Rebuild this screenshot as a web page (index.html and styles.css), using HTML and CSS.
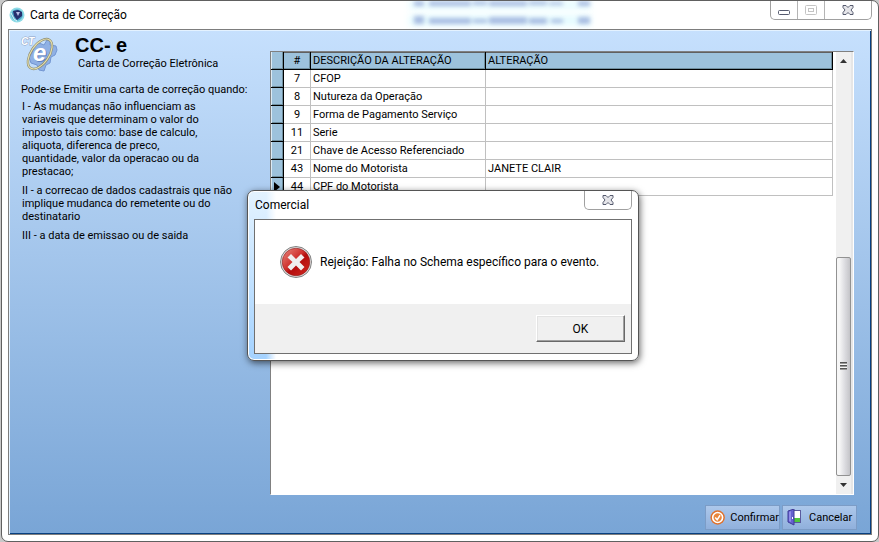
FILE: index.html
```html
<!DOCTYPE html>
<html lang="pt-BR">
<head>
  <meta charset="UTF-8" />
  <meta name="viewport" content="width=device-width, initial-scale=1.0" />
  <title>Carta de Correção</title>
  <link rel="stylesheet" href="styles.css">
</head>
<body>

  <div class="window">
    <!-- Title bar -->
    <header class="titlebar">
      <svg class="app-icon" viewBox="0 0 16 16" aria-hidden="true">
        <circle cx="8" cy="8" r="7.5" fill="#8fdbe6"/>
        <circle cx="8" cy="8" r="5.8" fill="#4fa9cc"/>
        <path d="M4 4l5-1 4 2v4l-5 4-3-4z" fill="#26306e"/>
        <path d="M7 5l4 0-2 4z" fill="#b9bfe6"/>
        <path d="M2 6l3 6 3 2" stroke="#e0fafa" fill="none"/>
      </svg>
      <h1 class="window-title">Carta de Correção</h1>
      <svg class="glass-blur" viewBox="0 0 200 28" aria-hidden="true">
        <g class="glow">
          <rect x="10" y="0" width="182" height="8"/>
          <rect x="10" y="14" width="182" height="11"/>
        </g>
        <g class="ink">
          <path d="M15 0h10v5H15zM30 0h42v5H30zM74 0h14v4H74zM90 0h38v5H90zM130 0h18v4h-18zM150 1h14v3h-14zM179 0h12v5h-12z"/>
          <path d="M15 15h10v8H15zM30 17h42v6H30zM74 18h14v4H74zM90 16h38v7H90zM130 17h18v6h-18zM152 18h12v4h-12zM179 16h12v7h-12z"/>
        </g>
      </svg>
      <div class="caption-buttons">
        <button type="button" class="min-btn" aria-label="Minimizar">
          <svg width="12" height="11" viewBox="0 0 12 11"><rect x=".5" y="5.500" width="11" height="4" rx="1" fill="#fff" stroke="#555a6e"/></svg>
        </button>
        <button type="button" class="max-btn" aria-label="Maximizar" disabled>
          <svg width="12" height="11" viewBox="0 0 12 11" fill="#fff" stroke="#c4c4c4"><rect x=".5" y=".5" width="11" height="9" rx="1"/><rect x="3.500" y="3.500" width="5" height="3"/></svg>
        </button>
        <button type="button" class="close-btn" aria-label="Fechar">
          <svg width="12" height="11" viewBox="0 0 12 11"><path d="M1 .5h3l2 2 2-2h3v2l-2 2.500 2 2.500v2H8l-2-2-2 2H1v-2L3 5 1 2.500z" fill="#e6e6ea" stroke="#555a6e"/></svg>
        </button>
      </div>
    </header>

    <main class="client">
      <div class="content">
        <!-- Instructions -->
        <section class="info">
          <div class="brand">
            <svg class="cte-logo" viewBox="0 0 38 38" aria-hidden="true">
              <path d="M13 12l5-4 5 2 3-5 3 1v4l6 1 1 4-2 5-4 2-1 6-4 2-2 6-5-1-2-5-6-2-2-6 3-4z" fill="#8fb0e4" stroke="#7396d2"/>
              <ellipse cx="19" cy="19" rx="9" ry="17" transform="rotate(34 19 19)" fill="none" stroke="#8a8a72" stroke-width="2.400"/>
              <ellipse cx="19" cy="19" rx="9" ry="17" transform="rotate(34 19 19)" fill="none" stroke="#e5dfac" stroke-width="1.200"/>
              <text class="logo-e-shadow" x="13" y="27">e</text>
              <text class="logo-e" x="12" y="26">e</text>
              <text class="logo-ct" x="0" y="10">CT</text>
            </svg>
            <div class="brand-text">
              <h2>CC- e</h2>
              <p>Carta de Correção Eletrônica</p>
            </div>
          </div>
          <p class="lead">Pode-se Emitir uma carta de correção quando:</p>
          <div class="rules">
            <p>I - As mudanças não influenciam as<br>
            variaveis que determinam o valor do<br>
            imposto tais como: base de calculo,<br>
            aliquota, diferenca de preco,<br>
            quantidade, valor da operacao ou da<br>
            prestacao;</p>
            <p>II - a correcao de dados cadastrais que não<br>
            implique mudanca do remetente ou do<br>
            destinatario</p>
            <p>III - a data de emissao ou de saida</p>
          </div>
        </section>

        <!-- Grid -->
        <section class="grid">
          <div class="grid-body">
            <table>
              <thead>
                <tr><th class="mark"></th><th class="num">#</th><th class="desc">DESCRIÇÃO DA ALTERAÇÃO</th><th>ALTERAÇÃO</th></tr>
              </thead>
              <tbody>
                <tr><td class="mark"></td><td class="num">7</td><td>CFOP</td><td></td></tr>
                <tr><td class="mark"></td><td class="num">8</td><td>Nutureza da Operação</td><td></td></tr>
                <tr><td class="mark"></td><td class="num">9</td><td>Forma de Pagamento Serviço</td><td></td></tr>
                <tr><td class="mark"></td><td class="num">11</td><td>Serie</td><td></td></tr>
                <tr><td class="mark"></td><td class="num">21</td><td>Chave de Acesso Referenciado</td><td></td></tr>
                <tr><td class="mark"></td><td class="num">43</td><td>Nome do Motorista</td><td>JANETE CLAIR</td></tr>
                <tr><td class="mark current"><svg width="6" height="10" viewBox="0 0 6 10"><path d="M0 0l6 5-6 5z"/></svg></td><td class="num">44</td><td>CPF do Motorista</td><td></td></tr>
              </tbody>
            </table>
          </div>
          <div class="scrollbar">
            <button type="button" aria-label="Rolar para cima"><svg width="7" height="4" viewBox="0 0 7 4"><path d="M0 4l3.500-4L7 4z"/></svg></button>
            <div class="track">
              <div class="thumb"><span class="grip"></span></div>
            </div>
            <button type="button" aria-label="Rolar para baixo"><svg width="7" height="4" viewBox="0 0 7 4"><path d="M0 0l3.500 4L7 0z"/></svg></button>
          </div>
        </section>
      </div>

      <footer class="actions">
        <button type="button" class="action">
          <svg width="17" height="17" viewBox="0 0 17 17" aria-hidden="true">
            <circle cx="8.500" cy="8.500" r="8" fill="#e0702a"/>
            <circle cx="8.500" cy="8.500" r="5.500" fill="#e9863c" stroke="#fff" stroke-width="1.800"/>
            <path d="M5.800 8.500l2.200 2.500 3.200-5" fill="none" stroke="#fff" stroke-width="1.600"/>
          </svg>
          Confirmar
        </button>
        <button type="button" class="action">
          <svg width="17" height="17" viewBox="0 0 17 17" aria-hidden="true">
            <rect x="5.500" y="1.500" width="8" height="12" fill="#fff" stroke="#5b5b9e"/>
            <path d="M7 9h6v4H7z" fill="#4fc63c"/>
            <path d="M1 2l6-2v16l-6-3z" fill="#6560cf" stroke="#3f3b96"/>
            <path d="M2 3l2-1v11l-2-1z" fill="#908be8"/>
            <rect x="5" y="8" width="1" height="2" fill="#fff"/>
          </svg>
          Cancelar
        </button>
      </footer>
    </main>
  </div>

  <!-- Error message -->
  <div class="dialog" role="alertdialog" aria-labelledby="dialogTitle" aria-describedby="dialogText">
    <div class="dialog-titlebar">
      <h2 id="dialogTitle">Comercial</h2>
      <div class="caption-buttons">
        <button type="button" class="close-btn" aria-label="Fechar">
          <svg width="12" height="11" viewBox="0 0 12 11"><path d="M1 .5h3l2 2 2-2h3v2l-2 2.500 2 2.500v2H8l-2-2-2 2H1v-2L3 5 1 2.500z" fill="#e6e6ea" stroke="#555a6e"/></svg>
        </button>
      </div>
    </div>
    <div class="dialog-client">
      <div class="message">
        <svg class="error-icon" viewBox="0 0 32 32" aria-hidden="true">
          <defs>
            <linearGradient id="red" x1="0" y1="0" x2="1" y2="1">
              <stop offset="0" stop-color="#e88a80"/>
              <stop offset=".45" stop-color="#cf2f2c"/>
              <stop offset=".55" stop-color="#b30d0d"/>
              <stop offset="1" stop-color="#d42a22"/>
            </linearGradient>
          </defs>
          <circle cx="16" cy="16" r="15.500" fill="#e4e4e4" stroke="#808080"/>
          <circle cx="16" cy="16" r="13.800" fill="url(#red)" stroke="#8c1a1a" stroke-width=".6"/>
          <path d="M11 8l5 5 5-5 3.500 3.500-5 4.500 5 5-3.500 3.500-5-5-5 5L7.500 21l5-5-5-4.500z" fill="#efefef"/>
        </svg>
        <p id="dialogText">Rejeição: Falha no Schema específico para o evento.</p>
      </div>
      <div class="dialog-actions">
        <button type="button" class="ok-btn">OK</button>
      </div>
    </div>
  </div>

</body>
</html>
```
FILE: styles.css
```css
* {
  box-sizing: border-box;
}

body {
  margin: 0;
  background: #c8c8c8;
  color: #000;
  font-family: Roboto, "Liberation Sans", sans-serif;
  font-size: 12px;
}

h1, h2, p {
  margin: 0;
  font-weight: normal;
}

button {
  font-family: inherit;
  font-size: inherit;
  color: inherit;
  padding: 0;
}

.window {
  display: flex;
  flex-direction: column;
  min-height: 100vh;
  margin-left: 1px;
  padding: 0 6px 6px;
  background: #fff;
  border: 1px solid #606060;
  border-radius: 7px;
}

/* Title bar */
.titlebar {
  position: relative;
  display: flex;
  align-items: flex-start;
  height: 28px;
}

.app-icon {
  width: 16px;
  height: 16px;
  margin: 6px 5px 0 1px;
}

.window-title {
  flex: 1;
  font-size: 12px;
  line-height: 28px;
}

.glass-blur {
  position: absolute;
  left: 391px;
  top: 0;
  width: 200px;
  height: 28px;
}

.glow {
  fill: #e6fcff;
  filter: blur(3px);
}

.ink {
  fill: #8fa3d6;
  opacity: 0.7;
  filter: blur(2px);
}

.caption-buttons {
  display: flex;
  height: 19px;
  border: 1px solid #a0a0a0;
  border-top: none;
  border-radius: 0 0 5px 5px;
}

.caption-buttons button {
  display: flex;
  align-items: center;
  justify-content: center;
  width: 27px;
  background: none;
  border: none;
  border-right: 1px solid #b4b4b4;
}

.caption-buttons .close-btn {
  width: 46px;
  border-right: none;
}

/* Client area */
.client {
  flex: 1;
  display: flex;
  flex-direction: column;
  border: 1px solid #7d7d7d;
  box-shadow: inset 1px 1px #e4f2ff, inset -1px -1px #073f80;
  background: linear-gradient(#c6e0fd, #79a5d6);
  font-size: 11px;
}

.content {
  flex: 1;
  display: flex;
  padding: 21px 17px 0 0;
}

.info {
  width: 261px;
  padding-left: 12px;
  margin-top: -18px;
}

.brand {
  display: flex;
  gap: 16px;
}

.cte-logo {
  width: 38px;
  height: 38px;
  margin-top: 2px;
}

.logo-e,
.logo-e-shadow {
  font: italic bold 24px "Liberation Sans", sans-serif;
  fill: #fff;
}

.logo-e-shadow {
  fill: #5f80bd;
}

.logo-ct {
  font: italic bold 10px "Liberation Sans", sans-serif;
  fill: #fff;
  stroke: #8fa3c4;
  stroke-width: 1px;
  paint-order: stroke;
}

.brand-text h2 {
  font: bold 20px/24px "Liberation Sans", Arial, sans-serif;
}

.brand-text p {
  padding-left: 3px;
  line-height: 13px;
}

.lead {
  margin-top: 8px;
  line-height: 17px;
  white-space: nowrap;
}

.rules {
  display: flex;
  flex-direction: column;
  gap: 6px;
  padding: 2px 0 0 1px;
  line-height: 13px;
  white-space: nowrap;
}

/* Grid */
.grid {
  flex: 1;
  display: flex;
  background: #fff;
  border: 1px solid #808080;
  border-right-color: #fff;
  border-bottom-color: #fff;
}

.grid-body {
  flex: 1;
  padding-right: 3px;
}

table {
  width: 100%;
  table-layout: fixed;
  border-collapse: separate;
  border-spacing: 0;
}

th,
td {
  height: 18px;
  padding: 0 2px;
  border-right: 1px solid #c0c0c0;
  border-bottom: 1px solid #c0c0c0;
  line-height: 17px;
  text-align: left;
  font-weight: normal;
}

th {
  background: #9dc2dc;
  border-color: #000;
  box-shadow: inset 0 1px #606060, inset -1px -1px #71909f;
}

.mark {
  width: 13px;
  background: #9dc2dc;
  border-color: #000;
  box-shadow: inset 1px 0 #dcebf5, inset -1px -1px #71909f;
}

.current {
  padding: 0 0 0 3px;
}

.current svg {
  display: block;
}

.num {
  width: 27px;
  text-align: center;
}

.desc {
  width: 175px;
}

.scrollbar {
  display: flex;
  flex-direction: column;
  width: 17px;
  background: #f0f0f0;
  border-right: 2px solid #e6e6e6;
}

.scrollbar button {
  display: flex;
  align-items: center;
  justify-content: center;
  height: 18px;
  background: none;
  border: none;
}

.scrollbar button svg {
  fill: #333;
}

.track {
  flex: 1;
  display: flex;
  flex-direction: column;
  justify-content: flex-end;
}

.thumb {
  display: flex;
  align-items: center;
  justify-content: center;
  height: 54%;
  border: 1px solid #929292;
  border-radius: 2px;
  background: linear-gradient(90deg, #f6f6f6 20%, #dcdce0 60%, #c4c4c8);
}

.grip {
  width: 7px;
  height: 8px;
  background: repeating-linear-gradient(#555 0 1px, #999 1px 2px, #f4f4f4 2px 3px);
}

/* Bottom buttons */
.actions {
  display: flex;
  justify-content: flex-end;
  gap: 2px;
  padding: 10px 14px 4px;
}

.action {
  display: flex;
  align-items: center;
  gap: 5px;
  width: 75px;
  height: 25px;
  padding-left: 4px;
  border: 1px solid #7c9cc6;
  background: linear-gradient(#adc8eb, #90b0dc);
}

/* Message box */
.dialog {
  position: absolute;
  left: 247px;
  top: 190px;
  width: 392px;
  padding: 0 6px 6px;
  border: 1px solid #555;
  border-radius: 7px;
  background: linear-gradient(90deg, transparent 18px, #fff 28px), linear-gradient(#e4f3ff, #a4d2ff);
  box-shadow: inset 0 0 0 1px #fff, 1px 2px 7px rgba(0, 0, 0, 0.6);
}

.dialog-titlebar {
  display: flex;
  justify-content: space-between;
  height: 28px;
}

.dialog-titlebar h2 {
  padding-left: 1px;
  font-size: 12px;
  line-height: 28px;
}

.dialog-client {
  border: 1px solid #707070;
  background: #fff;
}

.message {
  display: flex;
  align-items: center;
  gap: 8px;
  padding: 26px 25px;
  white-space: nowrap;
}

.error-icon {
  flex: none;
  width: 32px;
  height: 32px;
}

.dialog-actions {
  display: flex;
  justify-content: flex-end;
  padding: 11px 6px;
  background: #f0f0f0;
}

.ok-btn {
  width: 89px;
  height: 27px;
  background: #f0f0f0;
  border: 1px solid;
  border-color: #fff #696969 #696969 #fff;
  box-shadow: inset -1px -1px #a0a0a0, inset 1px 1px #e3e3e3;
}
```
